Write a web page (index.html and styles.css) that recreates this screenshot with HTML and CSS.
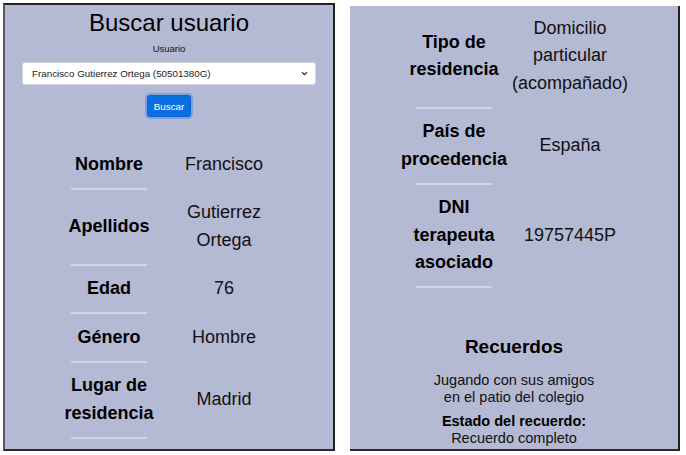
FILE: index.html
```html
<!DOCTYPE html>
<html lang="es">
<head>
<meta charset="utf-8">
<title>Buscar usuario</title>
<link rel="stylesheet" href="styles.css">
</head>
<body>
<div class="page">
  <section class="panel panel-left">
    <h1 class="title">Buscar usuario</h1>
    <label class="field-label" for="usuario">Usuario</label>
    <div class="select">
      <span class="select-text">Francisco Gutierrez Ortega (50501380G)</span>
      <svg class="chevron" width="7" height="5" viewBox="0 0 7 5"><path d="M1 1.2 L3.5 3.6 L6 1.2" fill="none" stroke="#333" stroke-width="1.2"/></svg>
    </div>
    <button class="btn" type="button">Buscar</button>
    <div class="table">
      <div class="row"><div class="k">Nombre</div><div class="v">Francisco</div><div class="sep"></div></div>
      <div class="row"><div class="k">Apellidos</div><div class="v">Gutierrez<br>Ortega</div><div class="sep"></div></div>
      <div class="row"><div class="k">Edad</div><div class="v">76</div><div class="sep"></div></div>
      <div class="row"><div class="k">Género</div><div class="v">Hombre</div><div class="sep"></div></div>
      <div class="row"><div class="k">Lugar de<br>residencia</div><div class="v">Madrid</div><div class="sep"></div></div>
    </div>
  </section>
  <section class="panel panel-right">
    <div class="scroll">
      <div class="table">
        <div class="row"><div class="k">Tipo de<br>residencia</div><div class="v">Domicilio<br>particular<br>(acompañado)</div><div class="sep"></div></div>
        <div class="row"><div class="k">País de<br>procedencia</div><div class="v">España</div><div class="sep"></div></div>
        <div class="row"><div class="k">DNI<br>terapeuta<br>asociado</div><div class="v">19757445P</div><div class="sep"></div></div>
      </div>
      <div class="memories">
        <h2 class="mem-title">Recuerdos</h2>
        <p class="mem-text">Jugando con sus amigos<br>en el patio del colegio</p>
        <p class="mem-state"><strong>Estado del recuerdo:</strong><br>Recuerdo completo</p>
      </div>
    </div>
  </section>
</div>
</body>
</html>
```
FILE: styles.css
```css
* { box-sizing: border-box; }
html, body { margin: 0; padding: 0; background: #ffffff; }
body { font-family: "Liberation Sans", Arial, sans-serif; color: #111; }

.page {
  display: flex;
  align-items: flex-end;
  gap: 15px;
  padding: 3px 0 0 3px;
  height: 451px;
}

.panel {
  background: #b5bad4;
  overflow: hidden;
}
.panel-left {
  width: 332px;
  height: 448px;
  border-top: 2px solid #222;
  border-left: 2px solid #5b5b66;
  border-right: 2px solid #222;
  border-bottom: 2px solid #2a2a2a;
  display: flex;
  flex-direction: column;
  align-items: center;
}
.panel-right {
  width: 330px;
  height: 445px;
  border-right: 2px solid #222;
  border-bottom: 2px solid #2a2a2a;
}

.title {
  margin: 4px 0 0;
  font-size: 24px;
  line-height: 28px;
  font-weight: normal;
  color: #000;
}
.field-label {
  margin-top: 6px;
  font-size: 9.5px;
  line-height: 12px;
  color: #111;
}
.select {
  margin-top: 7px;
  width: 294px;
  height: 23px;
  background: #fff;
  border: 1px solid #d4d6de;
  border-radius: 3px;
  display: flex;
  align-items: center;
  justify-content: space-between;
  padding: 0 7px 0 9px;
  font-size: 9.8px;
  color: #222;
}
.chevron { display: block; }
.btn {
  margin-top: 10px;
  width: 44px;
  height: 22px;
  background: #0b6fe3;
  color: #fff;
  border: 1px solid #0a64cc;
  border-radius: 3px;
  font-family: "Liberation Sans", Arial, sans-serif;
  font-size: 9.8px;
  padding: 0;
  box-shadow: 0 0 0 2px rgba(80, 140, 240, 0.55);
}

.table {
  margin-top: 24px;
  display: flex;
  flex-direction: column;
}
.row {
  display: grid;
  grid-template-columns: 108px 118px;
  column-gap: 2px;
  grid-template-rows: auto 2px;
  justify-content: center;
}
.k {
  grid-column: 1;
  grid-row: 1;
  align-self: center;
  padding: 9.5px 0;
  text-align: center;
  font-weight: bold;
  font-size: 18px;
  line-height: 27.5px;
  color: #000;
}
.v {
  grid-column: 2;
  grid-row: 1;
  align-self: center;
  padding: 9.5px 0;
  text-align: center;
  font-size: 18px;
  line-height: 27.5px;
  color: #111;
}
.sep {
  grid-column: 1;
  grid-row: 2;
  justify-self: center;
  width: 76px;
  height: 2px;
  background: #d2d5e6;
}

.panel-right .scroll { margin-top: -0.75px; }
.panel-right .table { margin-top: 0; }
.panel-right .row { grid-template-columns: 110px 118px; }

.memories {
  margin-top: 47.5px;
  text-align: center;
  color: #111;
}
.mem-title {
  margin: 0;
  font-size: 19px;
  line-height: 22px;
  font-weight: bold;
  color: #000;
}
.mem-text {
  margin: 14.5px 0 0;
  font-size: 14.5px;
  line-height: 17px;
}
.mem-state {
  margin: 7px 0 0;
  font-size: 14.5px;
  line-height: 16.5px;
}
.mem-state strong { color: #000; }
```
